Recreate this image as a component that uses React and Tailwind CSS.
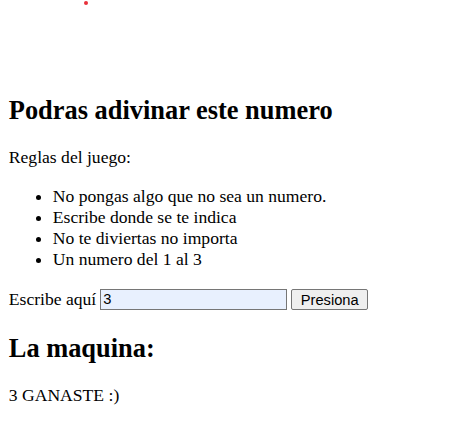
export default function App() {
  return (
    <div className="min-h-[430px] bg-white px-[8.8px] font-['Liberation_Serif',serif] text-[17.6px] leading-[21px] text-black">
      {/* lienzo con el punto */}
      <div className="relative h-[73px]">
        <div className="absolute left-[75px] top-[1px] h-[4px] w-[4px] rounded-full bg-[#e8303a]" />
      </div>

      <h2 className="my-[21.9px] text-[26.4px] leading-[1.15] font-bold">Podras adivinar este numero</h2>

      <p className="my-[17.6px]">Reglas del juego:</p>
      <ul className="my-[17.6px] list-disc pl-[44px]">
        <li>No pongas algo que no sea un numero.</li>
        <li>Escribe donde se te indica</li>
        <li>No te diviertas no importa</li>
        <li>Un numero del 1 al 3</li>
      </ul>

      <div className="my-[17.6px] flex h-[24px] items-center gap-[4px]">
        <span>Escribe aquí</span>
        <input
          type="text"
          defaultValue="3"
          className="h-[21px] w-[187px] border border-[#767676] bg-[#e8f0fe] px-[2px] font-['Liberation_Sans',sans-serif] text-[14.67px] text-black outline-none"
        />
        <button className="h-[21px] w-[77px] rounded-[2px] border border-[#767676] bg-[#efefef] font-['Liberation_Sans',sans-serif] text-[14.67px] text-black">
          Presiona
        </button>
      </div>

      <h2 className="my-[21.9px] text-[26.4px] leading-[1.15] font-bold">La maquina:</h2>
      <p className="my-[17.6px]">3 GANASTE :)</p>
    </div>
  );
}
